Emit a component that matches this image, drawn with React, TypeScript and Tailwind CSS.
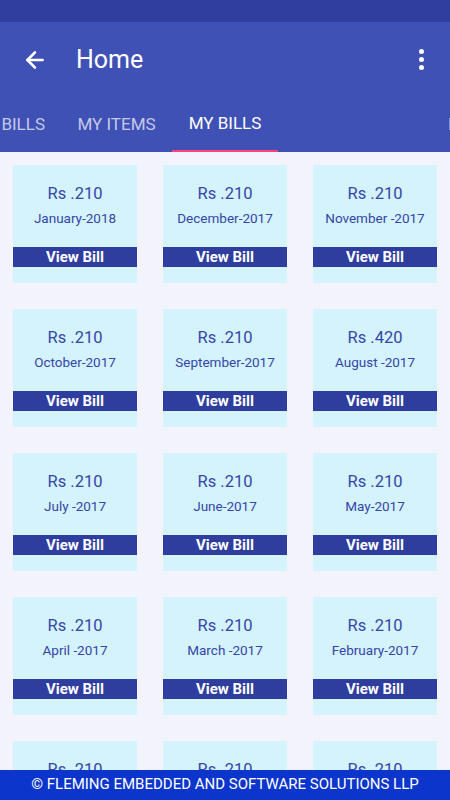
import { ArrowLeft } from "lucide-react";

const bills = [
  { amount: "210", month: "January-2018" },
  { amount: "210", month: "December-2017" },
  { amount: "210", month: "November -2017" },
  { amount: "210", month: "October-2017" },
  { amount: "210", month: "September-2017" },
  { amount: "420", month: "August -2017" },
  { amount: "210", month: "July -2017" },
  { amount: "210", month: "June-2017" },
  { amount: "210", month: "May-2017" },
  { amount: "210", month: "April -2017" },
  { amount: "210", month: "March -2017" },
  { amount: "210", month: "February-2017" },
  { amount: "210", month: "January-2017" },
  { amount: "210", month: "December-2016" },
  { amount: "210", month: "November-2016" },
];

function BillCard({ bill }: any) {
  return (
    <div className="bg-[#d4f3fc] h-[118px] flex flex-col items-center">
      <p className="mt-[18px] text-[16.5px] leading-[22px] text-[#3446a8]">
        Rs .{bill.amount}
      </p>
      <p className="mt-[3px] text-[13.5px] leading-[20px] text-[#3446a8]">
        {bill.month}
      </p>
      <div className="mt-[19px] w-full h-[20px] bg-[#2f3e9e] flex items-center justify-center text-white font-bold text-[15px] leading-none">
        View Bill
      </div>
    </div>
  );
}

export default function App() {
  return (
    <div
      className="w-[450px] h-[800px] overflow-hidden flex flex-col bg-[#f3f4fb]"
      style={{ fontFamily: "Roboto, 'Noto Sans', sans-serif" }}
    >
      {/* status bar */}
      <div className="h-[22px] bg-[#303f9f] shrink-0" />

      {/* toolbar + tabs */}
      <div className="bg-[#3f51b5] shrink-0">
        <div className="h-[72px] flex items-center px-[22px] pt-[3px]">
          <ArrowLeft className="w-[26px] h-[26px] text-white" strokeWidth={2.4} />
          <span className="ml-[28px] text-white text-[25px]">Home</span>
          <div className="ml-auto mr-[4px] flex flex-col gap-[3px] items-center">
            <span className="w-[5px] h-[5px] rounded-full bg-white" />
            <span className="w-[5px] h-[5px] rounded-full bg-white" />
            <span className="w-[5px] h-[5px] rounded-full bg-white" />
          </div>
        </div>
        <div className="h-[58px] flex items-stretch ml-[-40px]">
          <div className="w-[101px] flex items-center justify-end pr-[16px] text-white/70 text-[17px] pt-[3px] whitespace-nowrap shrink-0">
            PAY BILLS
          </div>
          <div className="w-[111px] flex items-center justify-center text-white/70 text-[17px] pt-[3px] shrink-0">
            MY ITEMS
          </div>
          <div className="w-[106px] flex flex-col shrink-0">
            <div className="flex-1 flex items-center justify-center text-white text-[17px] pt-[3px]">
              MY BILLS
            </div>
            <div className="h-[2px] bg-[#ff4081]" />
          </div>
          <div className="pl-[170px] flex items-center text-white/70 text-[17px] pt-[3px] whitespace-nowrap shrink-0">
            PROFILE
          </div>
        </div>
      </div>

      {/* bills grid */}
      <div className="flex-1 overflow-hidden">
        <div className="grid grid-cols-[124px_124px_124px] gap-x-[26px] gap-y-[26px] pl-[13px] pt-[13px]">
          {bills.map((bill, i) => (
            <BillCard bill={bill} key={i} />
          ))}
        </div>
      </div>

      {/* footer */}
      <div className="h-[30px] bg-[#0b35cb] shrink-0 flex items-center justify-center text-white text-[15px] pb-[2px] whitespace-nowrap">
        © FLEMING EMBEDDED AND SOFTWARE SOLUTIONS LLP
      </div>
    </div>
  );
}
